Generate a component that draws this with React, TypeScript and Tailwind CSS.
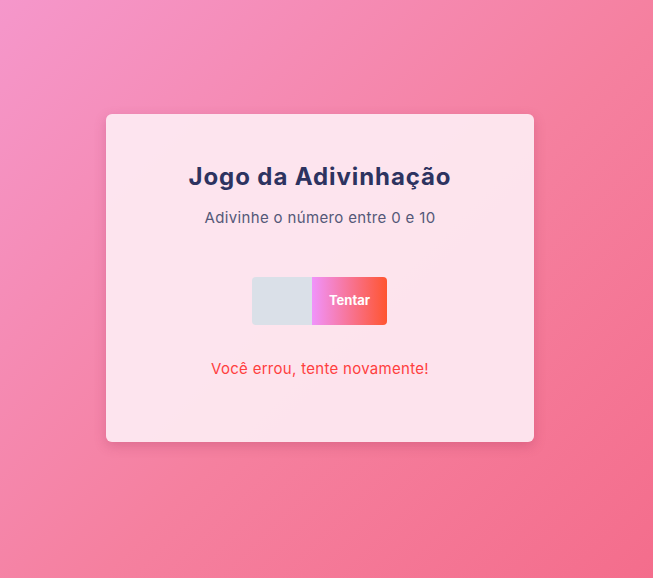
export default function App() {
  return (
    <div className="flex min-h-screen w-full items-center justify-center bg-[linear-gradient(135deg,#f597cb_0%,#f5809f_55%,#f46d8c_100%)] pr-[13px] pb-[22px]">
      <div className="flex h-[328px] w-[428px] flex-col items-center rounded-md bg-[#fde9f1]/95 px-10 pt-[45px] shadow-[0_4px_12px_rgba(150,40,80,0.25)]">
        <h1 className="font-['Inter',sans-serif] text-[24px] font-bold tracking-[0.9px] text-[#2d3360]">
          Jogo da Adivinhação
        </h1>
        <p className="mt-[12px] font-['Inter',sans-serif] text-[15px] tracking-[0.35px] text-[#545878]">
          Adivinhe o número entre 0 e 10
        </p>
        <div className="mt-[47px] mr-px flex h-12 overflow-hidden rounded">
          <input
            type="number"
            className="h-12 w-[60px] bg-[#dae0e8] outline-none"
          />
          <button className="h-12 w-[75px] bg-[linear-gradient(to_right,#f093fb,#ff5530)] font-['Inter',sans-serif] text-[13px] font-bold text-white">
            Tentar
          </button>
        </div>
        <p className="mt-[33px] font-['Inter',sans-serif] text-[15px] tracking-[0.3px] text-[#ff3e3e]">
          Você errou, tente novamente!
        </p>
      </div>
    </div>
  );
}
